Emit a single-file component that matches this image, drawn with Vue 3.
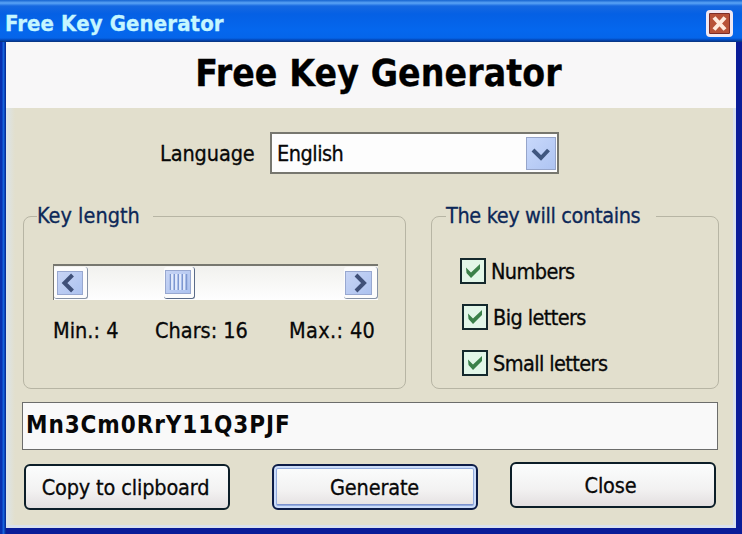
<script setup>
import { ref } from "vue"

const language = ref("English")
const chars = ref(16)
const key = ref("Mn3Cm0RrY11Q3PJF")

const options = ref([
  { id: "numbers", label: "Numbers", checked: true },
  { id: "big", label: "Big letters", checked: true },
  { id: "small", label: "Small letters", checked: true },
])

const sets = {
  numbers: "0123456789",
  big: "ABCDEFGHIJKLMNOPQRSTUVWXYZ",
  small: "abcdefghijklmnopqrstuvwxyz",
}

function step(n) {
  chars.value = Math.min(40, Math.max(4, chars.value + n))
}

function handleGenerate() {
  const pool = options.value
    .filter(o => o.checked)
    .map(o => sets[o.id])
    .join("")

  if (!pool) return

  let result = ""
  for (let i = 0; i < chars.value; i++) {
    result += pool[Math.floor(Math.random() * pool.length)]
  }
  key.value = result
}

function handleCopy() {
  navigator.clipboard.writeText(key.value)
}
</script>

<template>
  <div class="window">
    <div class="titlebar">
      <span class="title">Free Key Generator</span>
      <button class="close-x">
        <svg width="21" height="21" viewBox="0 0 21 21">
          <path d="M5 4.5L16 16.5M16 4.5L5 16.5" stroke="#ffe9dc" stroke-width="4" />
        </svg>
      </button>
    </div>

    <div class="client">
      <h1 class="banner"><span>Free Key Generator</span></h1>

      <div class="language">
        <span class="language-label">Language</span>
        <div class="select">
          <span class="select-value">{{ language }}</span>
          <span class="arrow">
            <svg width="28" height="32" viewBox="0 0 28 32">
              <path d="M6 12L14 20L21.500 12" fill="none" stroke="#3f567f" stroke-width="4" />
            </svg>
          </span>
        </div>
      </div>

      <div class="groups">
        <fieldset class="group length">
          <legend class="legend-length">Key length</legend>
          <div class="scrollbar">
            <button class="scroll-button left" @click="step(-1)">
              <svg width="26" height="24" viewBox="0 0 26 24">
                <path d="M15.500 4L7.500 12L15.500 20" fill="none" stroke="#3f5078" stroke-width="4" />
              </svg>
            </button>
            <span class="thumb">
              <svg width="26" height="24" viewBox="0 0 26 24">
                <path d="M5.500 4V20M9.500 4V20M13.500 4V20M17.500 4V20M21.500 4V20" stroke="#7e97cf" stroke-width="1.500" />
                <path d="M7 4V20M11 4V20M15 4V20M19 4V20" stroke="#eef4ff" stroke-width="1.500" />
              </svg>
            </span>
            <button class="scroll-button right" @click="step(1)">
              <svg width="27" height="24" viewBox="0 0 27 24">
                <path d="M11 4L19 12L11 20" fill="none" stroke="#3f5078" stroke-width="4" />
              </svg>
            </button>
          </div>
          <div class="limits">
            <span class="min">Min.: 4</span>
            <span class="chars">Chars: {{ chars }}</span>
            <span class="max">Max.: 40</span>
          </div>
        </fieldset>

        <fieldset class="group contains">
          <legend class="legend-contains">The key will contains</legend>
          <label
            v-for="option in options"
            :key="option.id"
            class="option"
            :class="option.id"
            @click="option.checked = !option.checked"
          >
            <span class="box">
              <svg v-if="option.checked" width="22" height="22" viewBox="0 0 22 22">
                <path d="M4 7.500L9 12.500L18 4V9L9 18L4.500 13Z" fill="#3a8049" />
              </svg>
            </span>
            <span class="option-text">{{ option.label }}</span>
          </label>
        </fieldset>
      </div>

      <div class="field"><span>{{ key }}</span></div>

      <div class="buttons">
        <button class="button copy" @click="handleCopy">Copy to clipboard</button>
        <button class="button generate" @click="handleGenerate">Generate</button>
        <button class="button close">Close</button>
      </div>
    </div>
  </div>
</template>

<style>
body {
  margin: 0;
  overflow: hidden;
}
</style>

<style scoped>
* {
  box-sizing: border-box;
}

.window,
button {
  font-family: "DejaVu Sans Condensed", "DejaVu Sans", sans-serif;
  font-stretch: condensed;
  font-size: 21.5px;
  color: #080808;
  -webkit-text-stroke: 0.3px;
}

.window {
  width: 742px;
  height: 534px;
  padding: 0 6px 6px;
  background:
    linear-gradient(#0a1c98, #0a1c98) 6px 100% / 736px 6px no-repeat,
    linear-gradient(90deg, #0830b0 0, #0830b0 2px, #1763dc 3px, #1763dc 4px, #06309c 5px, #06309c 50%, #0a1c98 51%, #0a1c98 100%);
  display: flex;
  flex-direction: column;
  white-space: nowrap;
}

svg {
  display: block;
}

button {
  padding: 0;
  border: none;
}

.titlebar {
  height: 42px;
  margin: 0 -6px;
  padding: 4px 9px 0 5px;
  display: flex;
  align-items: center;
  justify-content: space-between;
  background: linear-gradient(#1563d0 0, #5ba4f6 3px, #1668e0 6px, #0560e4 14px, #0567ee 30px, #0565ea 38px, #0347b8 40px, #0a3278 42px);
}

.title {
  font-size: 22px;
  font-weight: bold;
  color: #c5f6ff;
  letter-spacing: 0.1px;
}

.close-x {
  width: 27px;
  height: 27px;
  border: 3px solid #f1e8f2;
  border-radius: 4px;
  background: #b85238;
  box-shadow: inset 0 0 0 1px #7c2c28;
}

.client {
  flex: 1;
  background: linear-gradient(90deg, #dde5ec 0, #dfe2dc 4px, #e2dfcd 9px);
  border: solid #d9e1ee;
  border-width: 0 3px 3px 0;
}

.banner {
  height: 66px;
  margin: 0 -3px 0 0;
  padding: 0 0 4px 15px;
  background: #f8f7f8;
  display: flex;
  align-items: center;
  justify-content: center;
  font-size: 37px;
  letter-spacing: 0.1px;
  color: #000;
}

.language {
  display: flex;
  align-items: center;
  padding: 24px 0 0 154px;
}

.language-label {
  width: 110px;
  letter-spacing: -0.1px;
}

.select {
  width: 289px;
  height: 42px;
  border: 2px solid #77776f;
  background: #fdfdfd;
  display: flex;
  align-items: center;
  justify-content: space-between;
  padding: 0 1px 0 5px;
}

.select-value {
  letter-spacing: -0.5px;
}

.arrow {
  width: 30px;
  height: 33px;
  border: 1px solid #96a5ca;
  background: linear-gradient(135deg, #c8d8fb, #aec4f2);
}

.groups {
  display: flex;
  gap: 25px;
  padding: 31px 0 0 17px;
}

.group {
  height: 184px;
  margin: 0;
  padding: 0;
  border: 1px solid #b7b5a4;
  border-radius: 8px;
}

.length {
  width: 383px;
}

.contains {
  width: 288px;
}

legend {
  height: 22px;
  line-height: 22px;
  margin-left: 13px;
  padding: 0 13px 0 0;
  color: #0d2858;
}

.legend-contains {
  margin-left: 14px;
  padding-right: 16px;
  letter-spacing: -0.37px;
}

.scrollbar {
  width: 325px;
  height: 36px;
  margin: 37px 0 0 29px;
  border: solid #77776f;
  border-width: 2px 0 0 1px;
  background: linear-gradient(#f1f1ee, #fefefe);
  display: flex;
  align-items: center;
}

.scroll-button,
.thumb {
  width: 34px;
  height: 32px;
  padding: 3px;
  border: solid #8793a6;
  border-width: 0 1px 1px 0;
  border-radius: 3px;
  background: #fcfcfc;
}

.scroll-button svg,
.thumb svg {
  background: linear-gradient(135deg, #c8d5f5, #acc2ef);
  box-shadow: inset 0 0 0 1px #98a8d0;
}

.thumb {
  width: 31px;
  margin-left: 76px;
  padding: 3px 2px 3px 1px;
  border-color: #5a6b88;
}

.right {
  margin-left: auto;
  padding-left: 1px;
}

.limits {
  display: flex;
  margin: 18px 0 0 29px;
}

.min {
  width: 102px;
}

.chars {
  width: 134px;
}

.max {
  letter-spacing: 0.35px;
}

.option {
  display: flex;
  align-items: center;
  gap: 5px;
  height: 26px;
  margin: 0 0 20px 30px;
  letter-spacing: -0.6px;
}

.numbers {
  margin: 31px 0 20px 28px;
}

.option-text {
  margin-top: 1px;
}

.box {
  width: 26px;
  height: 26px;
  border: 2px solid #14282c;
  background: #e2f6e8;
}

.field {
  width: 696px;
  height: 48px;
  margin: 13px 0 0 16px;
  padding: 0 0 2px 3px;
  border: 1.5px solid #6c6d6b;
  background: #f9f9f9;
  display: flex;
  align-items: center;
  font-size: 24px;
  font-weight: bold;
  letter-spacing: 0.9px;
  -webkit-text-stroke: 0;
}

.buttons {
  display: flex;
  align-items: flex-start;
  padding: 14px 0 0 18px;
}

.button {
  width: 206px;
  height: 46px;
  padding: 0 3px 0 0;
  border: 2px solid #0c1e28;
  border-radius: 6px;
  background: linear-gradient(#fbfdfd, #f2f1f1 60%, #e3dfe0);
  letter-spacing: -0.15px;
}

.generate {
  margin-left: 42px;
  padding-right: 1px;
  border-color: #0c1c48;
  box-shadow: inset 0 0 0 2px #cbdcfa, inset 0 0 0 3px #93acdd, inset 0 -4px 0 #7b91cf;
}

.close {
  margin: -2px 0 0 32px;
  padding-right: 5px;
}
</style>
